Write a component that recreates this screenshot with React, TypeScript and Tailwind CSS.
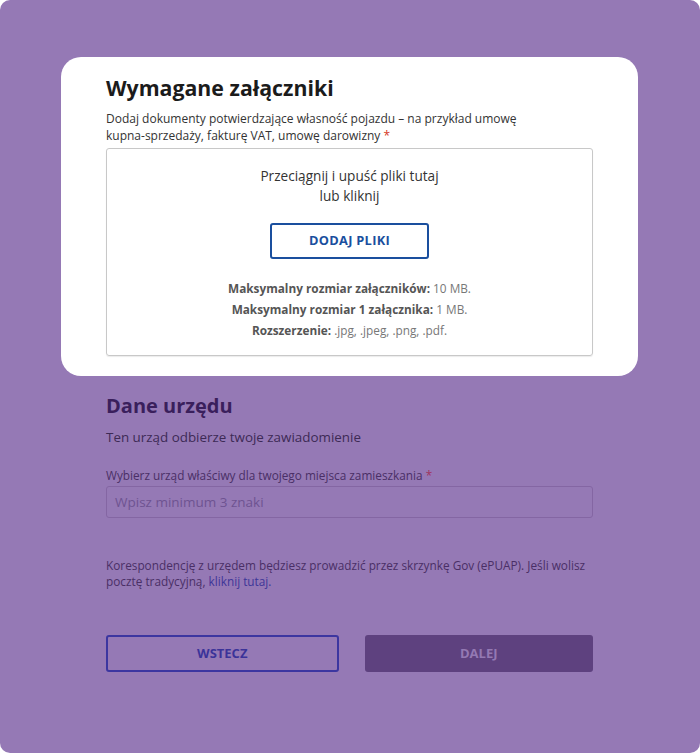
const font = { fontFamily: '"Open Sans", "Noto Sans", sans-serif' };

const limits = [
  { label: "Maksymalny rozmiar załączników:", value: "10 MB." },
  { label: "Maksymalny rozmiar 1 załącznika:", value: "1 MB." },
  { label: "Rozszerzenie:", value: ".jpg, .jpeg, .png, .pdf." },
];

export default function App() {
  return (
    <div className="h-[753px] w-[700px] bg-white" style={font}>
      <div className="flex h-full flex-col items-center rounded-[10px] bg-[#9579b5] pr-[1px] pt-[57px]">
        {/* Highlighted card */}
        <section className="w-[577px] rounded-[20px] bg-white px-[45px] pb-[20px] pt-[15px]">
          <h2 className="text-[21.3px] font-bold leading-[32px] text-[#1b1b1b]">
            Wymagane załączniki
          </h2>
          <p className="mt-[6px] w-[420px] text-[12px] leading-[17px] text-[#333]">
            Dodaj dokumenty potwierdzające własność pojazdu – na przykład umowę
            kupna-sprzedaży, fakturę VAT, umowę darowizny{" "}
            <span className="text-[#d4351c]">*</span>
          </p>
          <div className="mt-[4px] flex h-[208px] flex-col items-center rounded-[3px] border border-[#c8c8c8] pt-[17px] shadow-[0_1px_1px_rgba(0,0,0,0.08)]">
            <p className="text-center text-[13.6px] leading-[20px] text-[#333]">
              Przeciągnij i upuść pliki tutaj
              <br />
              lub kliknij
            </p>
            <button
              type="button"
              className="mt-[17px] h-[36px] w-[159px] rounded-[3px] border-2 border-[#1a4f9e] text-[12.8px] font-bold tracking-[0.3px] text-[#1a4f9e]"
            >
              DODAJ PLIKI
            </button>
            <ul className="mt-[19px] flex flex-col items-center text-[11.8px] leading-[21px]">
              {limits.map((l) => (
                <li key={l.label} className="text-[#777]">
                  <span className="font-bold text-[#555]">{l.label}</span>{" "}
                  {l.value}
                </li>
              ))}
            </ul>
          </div>
        </section>

        {/* Dimmed form */}
        <div className="w-[487px] pt-[16px]">
          <h3 className="text-[20px] font-bold leading-[28px] text-[#3a1f5c]">
            Dane urzędu
          </h3>
          <p className="mt-[7px] text-[13.4px] leading-[20px] text-[#3d2a55]">
            Ten urząd odbierze twoje zawiadomienie
          </p>
          <label className="mt-[20px] block text-[11.8px] leading-[17px] text-[#4a2f66]">
            Wybierz urząd właściwy dla twojego miejsca zamieszkania{" "}
            <span className="text-[#a0345f]">*</span>
          </label>
          <div className="mt-[2px] flex h-[32px] items-center rounded-[3px] border border-[#8466a3] px-[8px] text-[13.5px] text-[#6e5391]">
            Wpisz minimum 3 znaki
          </div>
          <p className="mt-[39px] text-[11.8px] leading-[16px] text-[#4a2f66]">
            Korespondencję z urzędem będziesz prowadzić przez skrzynkę Gov
            (ePUAP). Jeśli wolisz pocztę tradycyjną,{" "}
            <span className="text-[#3d3598]">kliknij tutaj.</span>
          </p>
          <div className="mt-[46px] flex gap-[26px]">
            <button
              type="button"
              className="h-[37px] flex-1 rounded-[3px] border-2 border-[#3c36a0] text-[13px] font-bold text-[#3b3399]"
            >
              WSTECZ
            </button>
            <button
              type="button"
              className="h-[37px] flex-1 rounded-[3px] bg-[#5e417f] text-[13px] font-bold text-[#9479b3]"
            >
              DALEJ
            </button>
          </div>
        </div>
      </div>
    </div>
  );
}
